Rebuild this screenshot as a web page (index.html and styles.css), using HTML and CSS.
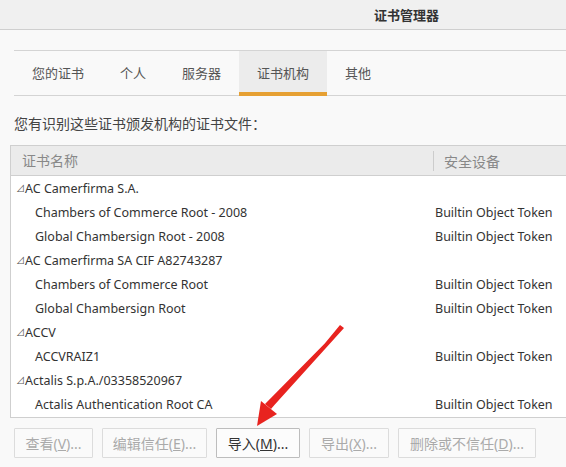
FILE: index.html
```html
<!DOCTYPE html>
<html lang="zh-CN">
<head>
<meta charset="utf-8">
<link rel="stylesheet" href="styles.css">
</head>
<body>
<div class="window">
  <div class="titlebar"><span class="title">证书管理器</span></div>
  <div class="tabs">
    <div class="tab">您的证书</div>
    <div class="tab">个人</div>
    <div class="tab">服务器</div>
    <div class="tab active">证书机构</div>
    <div class="tab">其他</div>
  </div>
  <p class="desc">您有识别这些证书颁发机构的证书文件：</p>
  <div class="table">
    <div class="thead">
      <div class="c1">证书名称</div>
      <div class="c2">安全设备</div>
    </div>
    <div class="row group"><div class="c1"><span class="tw">⊿</span>AC Camerfirma S.A.</div><div class="c2"></div></div>
    <div class="row"><div class="c1 child">Chambers of Commerce Root - 2008</div><div class="c2">Builtin Object Token</div></div>
    <div class="row"><div class="c1 child">Global Chambersign Root - 2008</div><div class="c2">Builtin Object Token</div></div>
    <div class="row group"><div class="c1"><span class="tw">⊿</span>AC Camerfirma SA CIF A82743287</div><div class="c2"></div></div>
    <div class="row"><div class="c1 child">Chambers of Commerce Root</div><div class="c2">Builtin Object Token</div></div>
    <div class="row"><div class="c1 child">Global Chambersign Root</div><div class="c2">Builtin Object Token</div></div>
    <div class="row group"><div class="c1"><span class="tw">⊿</span>ACCV</div><div class="c2"></div></div>
    <div class="row"><div class="c1 child">ACCVRAIZ1</div><div class="c2">Builtin Object Token</div></div>
    <div class="row group"><div class="c1"><span class="tw">⊿</span>Actalis S.p.A./03358520967</div><div class="c2"></div></div>
    <div class="row"><div class="c1 child">Actalis Authentication Root CA</div><div class="c2">Builtin Object Token</div></div>
  </div>
  <div class="buttons">
    <button class="btn b1" disabled>查看(<u>V</u>)...</button>
    <button class="btn b2" disabled>编辑信任(<u>E</u>)...</button>
    <button class="btn b3">导入(<u>M</u>)...</button>
    <button class="btn b4" disabled>导出(<u>X</u>)...</button>
    <button class="btn b5" disabled>删除或不信任(<u>D</u>)...</button>
  </div>
  <svg class="arrow" width="566" height="467" viewBox="0 0 566 467">
    <path d="M342 326 L271 409 L265 404 Z M340 325 L344 328 L269 411 Z" fill="#e8231f"/>
    <path d="M257 426 L261 401 L277 414 Z" fill="#e8231f"/>
  </svg>
</div>
</body>
</html>
```
FILE: styles.css
```css
* { box-sizing: border-box; }
html, body { margin: 0; padding: 0; }
body {
  width: 566px;
  height: 467px;
  overflow: hidden;
  background: #f9f9f9;
  font-family: "Noto Sans", "Noto Sans CJK SC", sans-serif;
  font-size: 13px;
  color: #333;
}
.window { position: relative; width: 566px; height: 467px; }
.titlebar {
  height: 30px;
  background: #f0f0f0;
  border-bottom: 1px solid #cfcfcf;
  display: flex;
  align-items: center;
  padding-left: 374px;
}
.title { font-weight: bold; color: #333; font-size: 13px; }
.tabs {
  margin: 20px 0 0 14px;
  height: 46px;
  border-top: 1px solid #d4d4d4;
  border-bottom: 1px solid #d4d4d4;
  display: flex;
  align-items: stretch;
}
.tab {
  display: flex;
  align-items: center;
  padding: 2px 18px 0;
  color: #555;
  border-bottom: 4px solid transparent;
}
.tab.active {
  background: #ececec;
  border-bottom-color: #e6a033;
  margin-bottom: -1px;
}
.desc { margin: 0; padding: 17px 0 0 14px; height: 49px; color: #444; font-size: 14px; }
.table {
  margin-left: 10px;
  background: #fff;
  border: 1px solid #cfcfcf;
  border-right: none;
  height: 273px;
  overflow: hidden;
}
.thead {
  height: 30px;
  background: #ebebeb;
  border-bottom: 1px solid #cfcfcf;
  display: flex;
  align-items: center;
  color: #888;
  font-size: 14px;
}
.thead .c1 { width: 423px; padding-left: 11px; border-right: 1px solid #ccc; height: 20px; line-height: 20px; }
.thead .c2 { padding-left: 10px; }
.row { height: 24px; display: flex; align-items: center; font-size: 12.5px; }
.row .c1 { width: 424px; padding-left: 5px; }
.row .c1.child { padding-left: 24px; }
.row .c2 { padding-left: 0; }
.tw { font-size: 9px; color: #555; margin-right: 0; display: inline-block; vertical-align: 1px; }
.buttons {
  display: flex;
  gap: 9px;
  padding: 10px 0 0 14px;
}
.btn {
  height: 30px;
  font: inherit;
  font-size: 14px;
  background: #fafafa;
  border: 1px solid #dcdcdc;
  color: #aaa;
  padding: 0;
  border-radius: 1px;
}
.btn u { text-decoration: underline; }
.b1 { width: 79px; }
.b2 { width: 105px; }
.b3 { width: 84px; }
.b4 { width: 80px; }
.b5 { width: 138px; }
.btn.b3 { border-color: #bdbdbd; color: #333; background: #fcfcfc; }
.arrow { position: absolute; left: 0; top: 0; pointer-events: none; }
```
